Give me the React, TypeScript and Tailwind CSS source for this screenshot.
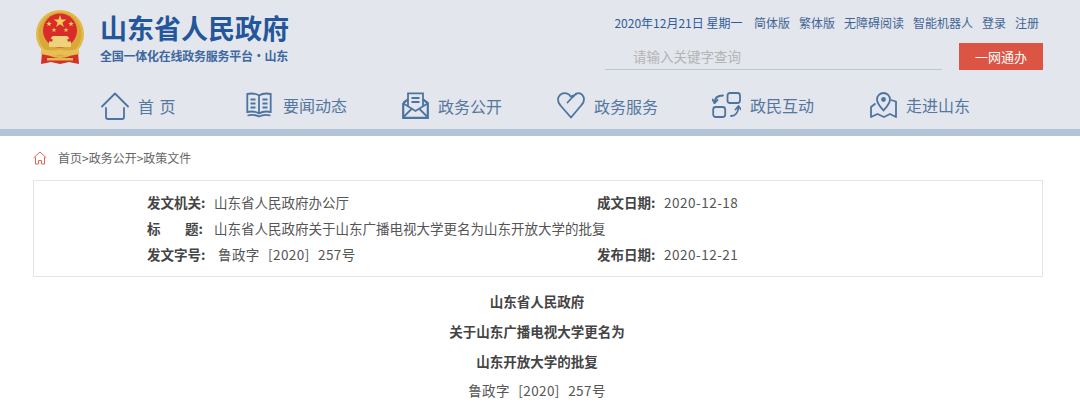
const Emblem = () => (
  <svg width="48" height="54" viewBox="0 0 48 54">
    <path d="M6 42 L5 54 L15 52 L24 54 L33 52 L43 54 L42 42 Z" fill="#d3302b" />
    <ellipse cx="24" cy="24" rx="24" ry="24" fill="#e4b94a" />
    <ellipse cx="24" cy="24" rx="21.500" ry="22" fill="#d8a93a" />
    <circle cx="24" cy="20.500" r="17" fill="#d92b2a" />
    <path d="M24 5l1.500 4.600h4.900l-4 2.900 1.500 4.600-3.900-2.900-3.900 2.900 1.500-4.600-4-2.900h4.900z" fill="#f3cf5a" />
    <path d="M13 11l.7 2h2.100l-1.700 1.300.6 2-1.700-1.200-1.700 1.200.6-2-1.700-1.300h2.100z" fill="#f3cf5a" />
    <path d="M35 11l.7 2h2.100l-1.700 1.300.6 2-1.700-1.200-1.700 1.200.6-2-1.700-1.300h2.100z" fill="#f3cf5a" />
    <path d="M18 17.500l.6 1.700h1.800l-1.400 1.100.5 1.700-1.500-1-1.500 1 .5-1.700-1.400-1.100h1.800z" fill="#f3cf5a" />
    <path d="M30 17.500l.6 1.700h1.800l-1.400 1.100.5 1.700-1.500-1-1.500 1 .5-1.700-1.400-1.100h1.800z" fill="#f3cf5a" />
    <path d="M16.500 26h15l2 3h-2v2.500h3.500V37H13v-5.500h3.500V29h-2z" fill="#efd27c" />
    <path d="M6 38c6 3 12 3 18 1.500 6 1.500 12 1.500 18-1.500l1.500 5.500c-6 2.500-13 2.500-19.500 1-6.500 1.500-13.500 1.500-19.500-1z" fill="#e6bf55" />
    <rect x="11" y="48" width="26" height="2.500" fill="#e4b94a" />
  </svg>
);

const iconClass = "fill-none stroke-[#4d74a0] stroke-[1.800]";

const HomeIcon = () => (
  <svg width="28" height="28" viewBox="0 0 28 28" className={iconClass}>
    <path d="M1 14.500 14 1.500l13 13" strokeLinecap="round" strokeLinejoin="round" />
    <path d="M5 16v9a2 2 0 0 0 2 2h14a2 2 0 0 0 2-2v-9" strokeLinecap="round" />
  </svg>
);

const BookIcon = () => (
  <svg width="26" height="26" viewBox="0 0 26 26" className={iconClass}>
    <path d="M13 3.500C10 1.600 5 1.200 1.300 2v18c3.700-.8 8.700-.4 11.700 1.500 3-1.900 8-2.300 11.700-1.500V2C21 1.200 16 1.600 13 3.500zM13 3.500v18" />
    <path d="M4.500 7.500h5M4.500 11.500h5M4.500 15.500h5M16.500 7.500h5M16.500 11.500h5M16.500 15.500h5" />
    <path d="M1.500 23.500c4-1 8.500-.5 11.500 1 3-1.500 7.500-2 11.500-1" />
  </svg>
);

const MailIcon = () => (
  <svg width="27" height="27" viewBox="0 0 27 27" className={iconClass}>
    <path d="M1.200 11v14.800h24.600V11l-4.800-3.500M6 7.500 1.200 11" strokeWidth="2.200" />
    <path d="M6 14.500V1.300h15v13.200" />
    <path d="M9.500 6h8M9.500 10h8" />
    <path d="m1.500 11.500 12 7.500 12-7.500M1.500 25l8.500-8.500M25.500 25 17 16.500" />
  </svg>
);

const HeartIcon = () => (
  <svg width="28" height="27" viewBox="0 0 28 27" className={iconClass}>
    <path
      d="M16 5C17.500 2.800 19.500 1.200 21.500 1.200c3.200 0 5.500 3 5.500 6.300 0 2.200-1 4-2.500 5.500L14 25.500 3.500 13.500C2 12 1 10 1 7.800 1 4.300 3.800 1.200 7.500 1.200c2.500 0 4.800 1.200 6 3.300 L19 2.500 M18.500 2 10.500 10.500"
      strokeLinecap="round"
      strokeLinejoin="round"
    />
  </svg>
);

const InteractIcon = () => (
  <svg width="29" height="26" viewBox="0 0 29 26" className={iconClass}>
    <rect x="15.500" y="1" width="12.500" height="10" rx="2.500" />
    <rect x="1.200" y="15" width="12" height="10" rx="2.500" />
    <path d="M11 3.500C6 3.500 2.500 6 2.500 11" strokeLinecap="round" />
    <path d="M.5 7.500 2.500 11 5.500 8" strokeLinecap="round" strokeLinejoin="round" />
    <path d="M19 24c4 0 7-3 7.500-9" strokeLinecap="round" />
    <path d="M23.500 17.500 26.500 14 29 17.500" strokeLinecap="round" strokeLinejoin="round" />
  </svg>
);

const MapIcon = () => (
  <svg width="27" height="26" viewBox="0 0 27 26" className={iconClass}>
    <path d="M13.500 18.500c-3.500-4-6.500-7-6.500-11a6.500 6.500 0 0 1 13 0c0 4-3 7-6.500 11z" />
    <circle cx="13.500" cy="7.500" r="1.500" fill="#4d74a0" />
    <path d="M5.500 11.500 1 15v10l6.500-3 6.500 3 6-3 6 3V9.500L21 8" strokeLinejoin="round" />
  </svg>
);

const CrumbHome = () => (
  <svg width="14" height="14" viewBox="0 0 14 14" className="fill-none stroke-[#de6a5d] stroke-1">
    <path d="M.7 6.800 7 1l6.300 5.800" />
    <path d="M2.500 6v7h3V9.500h3V13h3V6" />
  </svg>
);

const navItems = [
  { icon: <HomeIcon />, label: "首 页", gap: "gap-[9px]", width: "w-[145px]" },
  { icon: <BookIcon />, label: "要闻动态", gap: "gap-[11px]", width: "w-[156px]" },
  { icon: <MailIcon />, label: "政务公开", gap: "gap-[9px]", width: "w-[155px]" },
  { icon: <HeartIcon />, label: "政务服务", gap: "gap-[9px]", width: "w-[155px]" },
  { icon: <InteractIcon />, label: "政民互动", gap: "gap-[9px]", width: "w-[158px]" },
  { icon: <MapIcon />, label: "走进山东", gap: "gap-[9px]", width: "w-[110px]" },
];

const topLinks = ["简体版", "繁体版", "无障碍阅读", "智能机器人", "登录", "注册"];

const Meta = ({ label, value, className, valueClass }: { label: React.ReactNode; value: string; className?: string; valueClass?: string }) => (
  <div className={`flex items-center ${className ?? ""}`}>
    <span className="w-[67px] shrink-0 font-bold text-[#444]">{label}</span>
    <span className={`text-[#555] whitespace-nowrap ${valueClass ?? ""}`}>{value}</span>
  </div>
);

export default function App() {
  return (
    <div
      className="w-[1080px] h-[408px] overflow-hidden bg-white"
      style={{ fontFamily: '"Noto Sans CJK SC", "Noto Sans", sans-serif' }}
    >
      <header className="bg-[#e3e6ec] h-[136px] border-b-[7px] border-[#b3c4d6]">
        <div className="flex justify-between pl-[36px] pr-[37px] pt-[10px] h-[74px]">
          <div className="flex">
            <Emblem />
            <div className="ml-[16px] flex flex-col">
              <div className="text-[27px] leading-[36px] font-bold text-[#23569a] whitespace-nowrap">山东省人民政府</div>
              <div className="mt-[1px] text-[12px] leading-[18px] font-bold text-[#3d689f] whitespace-nowrap tracking-[-0.250px]">
                全国一体化在线政务服务平台·山东
              </div>
            </div>
          </div>
          <div className="flex flex-col items-end">
            <div className="flex items-center text-[12px] leading-[16px] mt-[5px] pr-[4px] text-[#3f6596] whitespace-nowrap">
              <span className="mr-[11.500px] text-[#2f5c98]">2020年12月21日 星期一</span>
              <div className="flex gap-[9px]">
                {topLinks.map((t) => (
                  <span key={t}>{t}</span>
                ))}
              </div>
            </div>
            <div className="flex items-end mt-[12px]">
              <div className="w-[337px] h-[27px] border-b border-[#bcc7d4] pl-[28px] text-[13.500px] leading-[26px] text-[#b4b4b4]">
                请输入关键字查询
              </div>
              <div className="ml-[17px] w-[84px] h-[27px] bg-[#dc5443] text-white text-[13px] leading-[27px] text-center">
                一网通办
              </div>
            </div>
          </div>
        </div>
        <nav className="flex pl-[101px] h-[45px] items-start pt-[18px]">
          {navItems.map((n) => (
            <div key={n.label} className={`flex items-center ${n.gap} ${n.width} shrink-0`}>
              {n.icon}
              <span className="text-[16px] leading-[24px] [word-spacing:2px] text-[#54779f] whitespace-nowrap">{n.label}</span>
            </div>
          ))}
        </nav>
      </header>
      <main className="px-[33px] text-[13.500px]">
        <div className="flex items-center h-[44px] pb-[1px] text-[12px] text-[#666]">
          <CrumbHome />
          <span className="ml-[11px]">首页&gt;政务公开&gt;政策文件</span>
        </div>
        <div className="w-[1010px] h-[97px] border border-[#e5e5e5] pl-[113px] pt-[8px] leading-[26px]">
          <div className="flex">
            <Meta label="发文机关:" value="山东省人民政府办公厅" className="w-[450px]" />
            <Meta label="成文日期:" value="2020-12-18" valueClass="tracking-[0.500px]" />
          </div>
          <Meta label={<span className="flex w-[56px] justify-between"><span>标</span><span>题:</span></span>} value="山东省人民政府关于山东广播电视大学更名为山东开放大学的批复" />
          <div className="flex">
            <Meta label="发文字号:" value="鲁政字 [2020] 257号" className="w-[450px]" valueClass="ml-[4px] [word-spacing:5px] tracking-[0.400px]" />
            <Meta label="发布日期:" value="2020-12-21" valueClass="tracking-[0.500px]" />
          </div>
        </div>
        <div className="w-[1008px] mt-[9px] text-center text-[#444] leading-[30px]">
          <div className="font-bold">山东省人民政府</div>
          <div className="font-bold">关于山东广播电视大学更名为</div>
          <div className="font-bold">山东开放大学的批复</div>
          <div className="text-[#555] leading-[28px] [word-spacing:5px] tracking-[0.400px]">鲁政字 [2020] 257号</div>
        </div>
      </main>
    </div>
  );
}
